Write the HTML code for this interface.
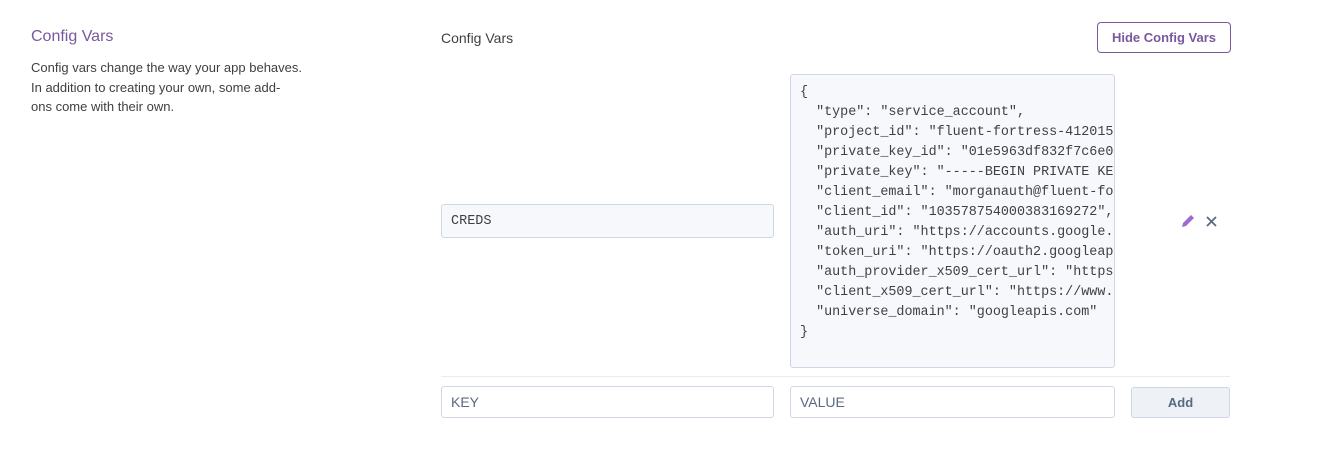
<!DOCTYPE html>
<html><head><style>
body{margin:0;width:1319px;height:454px;background:#fff;font-family:"Liberation Sans",sans-serif;position:relative;overflow:hidden}
.a{position:absolute}
.t1{left:31px;top:28px;font-size:16px;color:#79589f}
.d{left:31px;top:58px;font-size:13px;line-height:19.5px;color:#3f3f44;width:320px}
.t2{left:441px;top:30px;font-size:14px;color:#3f3f44}
.btn{left:1097px;top:22px;width:132px;height:29px;border:1px solid #79589f;border-radius:4px;color:#79589f;font-size:13px;font-weight:bold;text-align:center;line-height:29px;box-sizing:content-box}
.in{border:1px solid #cfd7e6;border-radius:3px;background:#f7f8fb;box-sizing:border-box;font-size:14px;color:#3f3f44;padding-left:9px}
.ta{left:790px;top:74px;width:325px;height:294px;overflow:hidden;padding:8px 0 0 9px;font-family:"Liberation Mono",monospace;font-size:13.4px;line-height:20px;white-space:pre;color:#3f3f44}
.add{left:1131px;top:387px;width:99px;height:31px;border:1px solid #cfd7e6;border-radius:3px;background:#eef1f6;box-sizing:border-box;text-align:center;line-height:29px;font-size:13px;font-weight:bold;color:#596981}
</style></head><body>
<div class="a t1">Config Vars</div>
<div class="a d">Config vars change the way your app behaves.<br>In addition to creating your own, some add-<br>ons come with their own.</div>
<div class="a t2">Config Vars</div>
<div class="a btn">Hide Config Vars</div>
<div class="a in" style="left:441px;top:204px;width:333px;height:34px;line-height:33px;font-family:'Liberation Mono',monospace;font-size:13.5px">CREDS</div>
<div class="a in ta">{
  "type": "service_account",
  "project_id": "fluent-fortress-412015",
  "private_key_id": "01e5963df832f7c6e0",
  "private_key": "-----BEGIN PRIVATE KEY",
  "client_email": "morganauth@fluent-fo",
  "client_id": "103578754000383169272",
  "auth_uri": "https://accounts.google.com",
  "token_uri": "https://oauth2.googleapis",
  "auth_provider_x509_cert_url": "https://",
  "client_x509_cert_url": "https://www.go",
  "universe_domain": "googleapis.com"
}</div>
<svg class="a" style="left:1180px;top:213px" width="16" height="16" viewBox="0 0 16 16"><path d="M2 14l1-4 8-8 3 3-8 8z" fill="#9f6bd1"/></svg>
<svg class="a" style="left:1206px;top:216px" width="11" height="11" viewBox="0 0 11 11"><path d="M1 1l9 9M10 1l-9 9" stroke="#596981" stroke-width="1.8"/></svg>
<div class="a" style="left:441px;top:376px;width:789px;height:1px;background:#e7ebf2"></div>
<div class="a in" style="left:441px;top:386px;width:333px;height:32px;line-height:30px;color:#596981;background:#fff">KEY</div>
<div class="a in" style="left:790px;top:386px;width:325px;height:32px;line-height:30px;color:#596981;background:#fff">VALUE</div>
<div class="a add">Add</div>
</body></html>
